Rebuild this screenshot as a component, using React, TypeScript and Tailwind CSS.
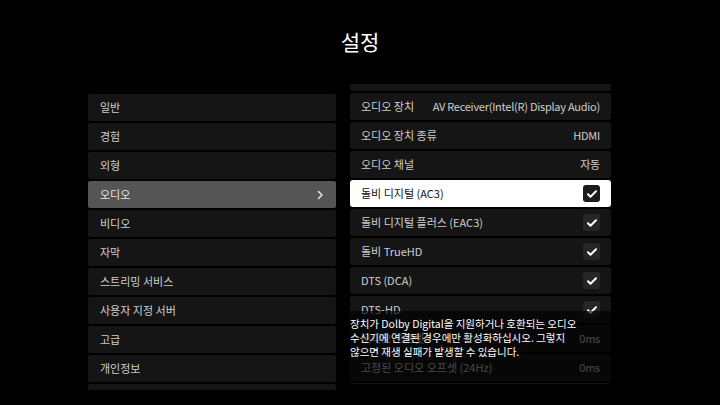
import React from "react";

const font = { fontFamily: '"Noto Sans CJK KR", "Noto Sans", sans-serif' };

const menu = [
  "일반",
  "경험",
  "외형",
  "오디오",
  "비디오",
  "자막",
  "스트리밍 서비스",
  "사용자 지정 서버",
  "고급",
  "개인정보",
  "",
];

interface Row {
  label: string;
  value?: string;
  check?: boolean;
  active?: boolean;
}

const rows: Row[] = [
  { label: "오디오 출력" },
  { label: "오디오 장치", value: "AV Receiver(Intel(R) Display Audio)" },
  { label: "오디오 장치 종류", value: "HDMI" },
  { label: "오디오 채널", value: "자동" },
  { label: "돌비 디지털 (AC3)", check: true, active: true },
  { label: "돌비 디지털 플러스 (EAC3)", check: true },
  { label: "돌비 TrueHD", check: true },
  { label: "DTS (DCA)", check: true },
  { label: "DTS-HD", check: true },
  { label: "오디오 오프셋", value: "0ms" },
  { label: "고정된 오디오 오프셋 (24Hz)", value: "0ms" },
  { label: "" },
];

const Check: React.FC<{ active?: boolean }> = ({ active }) => (
  <span
    className={`flex h-[17px] w-[17px] items-center justify-center rounded-[3px] ${
      active ? "bg-[#1c1c1c]" : "bg-[#262626]"
    }`}
  >
    <svg viewBox="0 0 24 24" className="h-[12px] w-[12px]" fill="none" stroke="#fff" strokeWidth="4" strokeLinecap="round" strokeLinejoin="round">
      <path d="M4 12.5l5 5L20 6.5" />
    </svg>
  </span>
);

const App: React.FC = () => {
  return (
    <div className="relative h-[405px] w-[720px] overflow-hidden bg-black text-[#cfcfcf]" style={font}>
      <h1 className="pt-[26px] text-center text-[21px] leading-[30px] font-normal text-white">설정</h1>

      <div className="mt-[38px] flex gap-[14px] pl-[88px]">
        <div className="flex h-[296px] w-[248px] flex-col gap-[2px] overflow-hidden">
          {menu.map((item, i) => (
            <div
              key={i}
              className={`flex h-[27px] shrink-0 items-center justify-between rounded-[2px] pl-[12px] pr-[10px] text-[11px] ${
                item === "오디오" ? "bg-[#555555] text-[#e6e6e6]" : "bg-[#151515]"
              }`}
            >
              <span>{item}</span>
              {item === "오디오" && (
                <svg viewBox="0 0 24 24" className="h-[12px] w-[12px]" fill="none" stroke="#e6e6e6" strokeWidth="3" strokeLinecap="round" strokeLinejoin="round">
                  <path d="M9 5l7 7-7 7" />
                </svg>
              )}
            </div>
          ))}
        </div>

        <div className="-mt-[10px] h-[300px] w-[261px] overflow-hidden">
          <div className="-mt-[20px] flex flex-col gap-[2px]">
            {rows.map((r, i) => (
              <div
                key={i}
                className={`flex h-[27px] shrink-0 items-center justify-between rounded-[3px] pl-[11px] pr-[11px] text-[11px] ${
                  r.active ? "bg-white text-[#111]" : "bg-[#151515]"
                }`}
              >
                <span>{r.label}</span>
                {r.value && <span className="tracking-[-0.25px]">{r.value}</span>}
                {r.check && <Check active={r.active} />}
              </div>
            ))}
          </div>
        </div>
      </div>

      <div className="absolute left-[340px] top-[311px] h-[71px] w-[282px] bg-black/65 px-[10px] pt-[6px] text-[10.5px] leading-[14px] text-white">
        장치가 Dolby Digital을 지원하거나 호환되는 오디오
        <br />
        수신기에 연결된 경우에만 활성화하십시오. 그렇지
        <br />
        않으면 재생 실패가 발생할 수 있습니다.
      </div>
    </div>
  );
};

export default App;
